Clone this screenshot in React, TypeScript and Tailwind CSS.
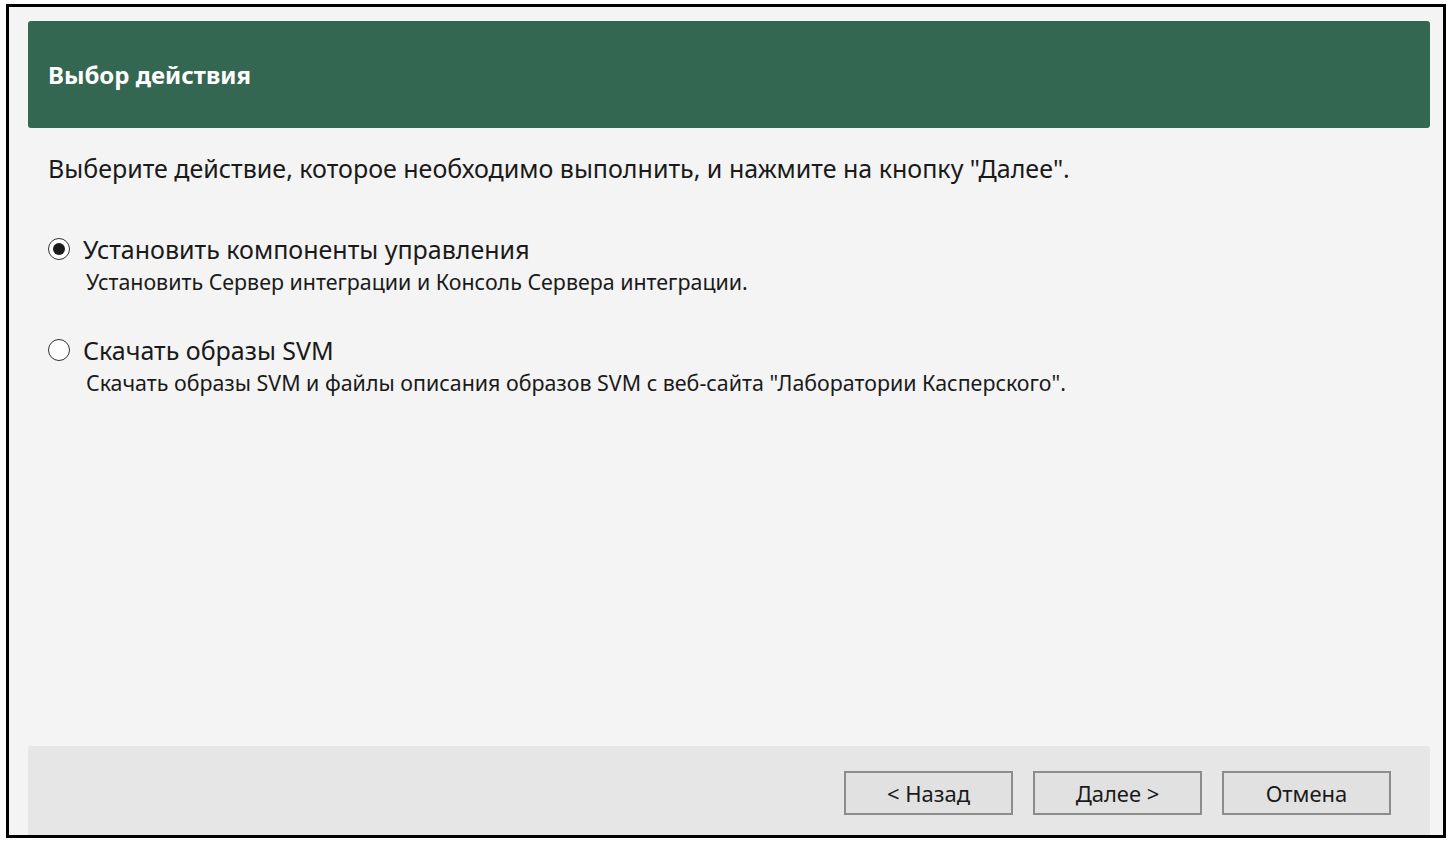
import { useState } from "react";

const options = [
  {
    id: "install",
    title: "Установить компоненты управления",
    hint: "Установить Сервер интеграции и Консоль Сервера интеграции.",
  },
  {
    id: "download",
    title: "Скачать образы SVM",
    hint: 'Скачать образы SVM и файлы описания образов SVM с веб-сайта "Лаборатории Касперского".',
  },
];

function Radio({ checked }: { checked: boolean }) {
  return (
    <span className="flex h-[22px] w-[22px] shrink-0 items-center justify-center rounded-full border-[1.5px] border-[#333] bg-white">
      {checked && <span className="h-[12px] w-[12px] rounded-full bg-[#1a1a1a]" />}
    </span>
  );
}

export default function App() {
  const [action, setAction] = useState("install");

  return (
    <div className="h-[843px] w-[1452px] bg-white pl-[6px] pt-[4px] font-['Noto_Sans',sans-serif] text-[#1a1a1a]">
      <div className="flex h-[834px] w-[1440px] flex-col border-[3px] border-black bg-[#f4f4f4]">
        <div className="pl-[19px] pr-[13px] pt-[14px]">
          <div className="flex h-[107px] items-center rounded-[3px] bg-[#346751] px-[20px]">
            <h1 className="text-[24px] font-bold text-white">Выбор действия</h1>
          </div>
        </div>

        <div className="flex-1 px-[39px]">
          <p className="mt-[24px] text-[25px] leading-[32px]">
            Выберите действие, которое необходимо выполнить, и нажмите на кнопку "Далее".
          </p>

          <div className="mt-[49px] flex flex-col gap-[35px]">
            {options.map((o) => (
              <label key={o.id} className="flex cursor-pointer flex-col" onClick={() => setAction(o.id)}>
                <span className="flex items-center gap-[13px]">
                  <Radio checked={action === o.id} />
                  <span className="text-[25px] leading-[32px]">{o.title}</span>
                </span>
                <span className="ml-[38px] text-[21.4px] leading-[34px]">{o.hint}</span>
              </label>
            ))}
          </div>
        </div>

        <div className="ml-[19px] mr-[13px] flex h-[89px] justify-end gap-[20px] rounded-t-[3px] bg-[#e6e6e6] pr-[39px] pt-[25px]">
          {["< Назад", "Далее >", "Отмена"].map((b) => (
            <button
              key={b}
              className="h-[44px] w-[169px] border-[2px] border-[#8c8c8c] bg-[#e1e1e1] text-[22px] text-[#1a1a1a]"
            >
              {b}
            </button>
          ))}
        </div>
      </div>
    </div>
  );
}
